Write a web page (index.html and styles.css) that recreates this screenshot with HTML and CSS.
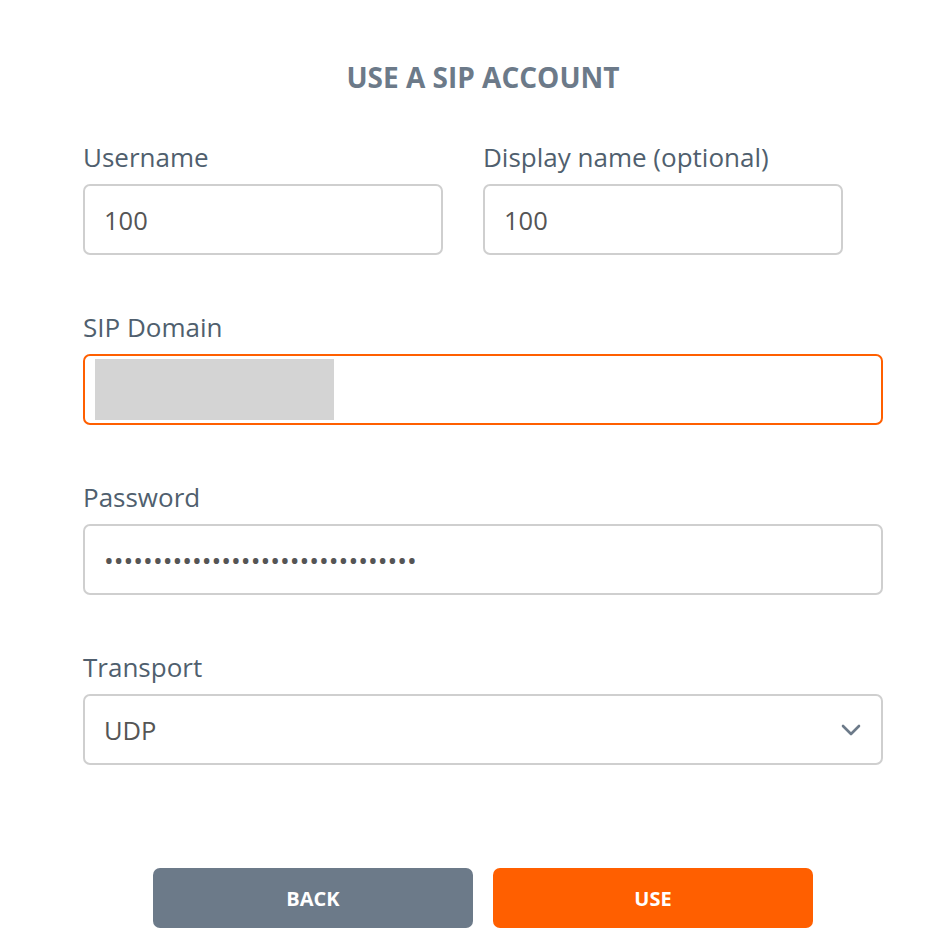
FILE: index.html
```html
<!DOCTYPE html>
<html>
<head>
<meta charset="utf-8">
<link rel="stylesheet" href="styles.css">
</head>
<body>
<div class="page">
  <h1 class="title">USE A SIP ACCOUNT</h1>
  <div class="row">
    <div class="field half">
      <label class="label">Username</label>
      <input class="input" type="text" value="100">
    </div>
    <div class="field half">
      <label class="label">Display name (optional)</label>
      <input class="input" type="text" value="100">
    </div>
  </div>
  <div class="field">
    <label class="label">SIP Domain</label>
    <div class="input focus"><span class="redact"></span></div>
  </div>
  <div class="field">
    <label class="label">Password</label>
    <input class="input" type="password" value="12345678901234567890123456789012">
  </div>
  <div class="field">
    <label class="label">Transport</label>
    <div class="input select">
      <span>UDP</span>
      <svg class="chev" width="20" height="12" viewBox="0 0 20 12"><path d="M2 2 L10 10 L18 2" fill="none" stroke="#6c7a89" stroke-width="2.6" stroke-linecap="round" stroke-linejoin="round"/></svg>
    </div>
  </div>
  <div class="actions">
    <button class="btn back">BACK</button>
    <button class="btn use">USE</button>
  </div>
</div>
</body>
</html>
```
FILE: styles.css
```css
* { box-sizing: border-box; }
body {
  margin: 0;
  background: #fff;
  font-family: "Open Sans", "Noto Sans", sans-serif;
}
.page {
  width: 800px;
  margin-left: 83px;
  padding-top: 58px;
}
.title {
  margin: 0 0 45px;
  text-align: center;
  font-size: 28px;
  font-weight: 700;
  color: #6c7a89;
  line-height: 38px;
}
.row {
  display: flex;
  gap: 40px;
}
.field {
  margin-bottom: 56px;
}
.field.half {
  width: 360px;
}
.label {
  display: block;
  font-size: 26px;
  line-height: 33px;
  color: #505f6e;
  margin-bottom: 10px;
}
.input {
  display: flex;
  align-items: center;
  width: 100%;
  height: 71px;
  border: 2px solid #cfcfcf;
  border-radius: 7px;
  padding: 0 19px;
  font-family: "Open Sans", "Noto Sans", sans-serif;
  font-size: 25.5px;
  color: #555;
  background: #fff;
  outline: none;
}
input[type=password] {
  font-size: 26px;
}
.focus {
  border-color: #ff5f00;
  padding: 0 10px;
}
.redact {
  display: block;
  width: 239px;
  height: 61px;
  background: #d4d4d4;
}
.select {
  justify-content: space-between;
  padding-right: 20px;
}
.chev { display: block; }
.actions {
  display: flex;
  justify-content: center;
  gap: 20px;
  margin-top: 103px;
}
.btn {
  width: 320px;
  height: 60px;
  border: none;
  border-radius: 7px;
  color: #fff;
  font-family: "Open Sans", "Noto Sans", sans-serif;
  font-size: 20px;
  font-weight: 700;
}
.back { background: #6c7a89; }
.use { background: #ff5f00; }
```
